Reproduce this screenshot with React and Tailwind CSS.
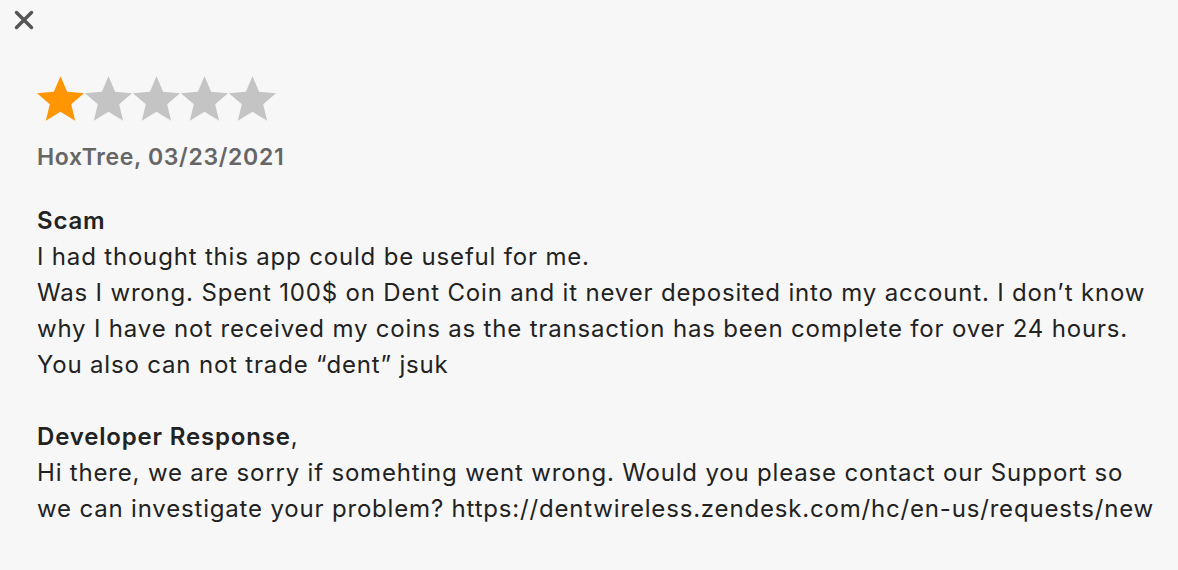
import React from "react";

function Star({ color }) {
  return (
    <svg viewBox="1.25 1.6 21.5 20.3" className="w-[47px] h-[45px]" aria-hidden>
      <path d="M12 1.6l3.05 7.1 7.7.6-5.85 5.05 1.8 7.55L12 17.85 5.3 21.9l1.8-7.55L1.25 9.3l7.7-.6z" fill={color} />
    </svg>
  );
}

export default function App() {
  const lines = [
    "I had thought this app could be useful for me.",
    "Was I wrong. Spent 100$ on Dent Coin and it never deposited into my account. I don\u2019t know",
    "why I have not received my coins as the transaction has been complete for over 24 hours.",
    "You also can not trade \u201cdent\u201d jsuk",
  ];
  return (
    <div
      className="w-[1178px] h-[570px] bg-[#f7f7f7] text-[#222] overflow-hidden"
      style={{ fontFamily: "Inter, 'Noto Sans', sans-serif" }}
    >
      <div className="pt-[10px] pl-[14px]">
        <svg viewBox="0 0 20 20" className="w-[20px] h-[20px]">
          <path d="M2.5 2.5L17.5 17.5M17.5 2.5L2.5 17.5" stroke="#555" strokeWidth="3.4" strokeLinecap="round" />
        </svg>
      </div>
      <div className="pl-[37px] pt-[46px]">
        <div className="flex gap-[1px]">
          <Star color="#ff9500" />
          <Star color="#c4c4c4" />
          <Star color="#c4c4c4" />
          <Star color="#c4c4c4" />
          <Star color="#c4c4c4" />
        </div>
        <div className="mt-[22px] text-[23px] font-semibold text-[#666] leading-[28px] tracking-[0.65px]">HoxTree, 03/23/2021</div>
        <div className="mt-[32px] text-[24px] leading-[36px] tracking-[0.82px]">
          <div className="font-semibold">Scam</div>
          {lines.map((l) => (
            <div key={l} className="whitespace-nowrap">{l}</div>
          ))}
          <div className="h-[36px]" />
          <div className="whitespace-nowrap"><span className="font-semibold">Developer Response</span>,</div>
          <div className="whitespace-nowrap">Hi there, we are sorry if somehting went wrong. Would you please contact our Support so</div>
          <div className="whitespace-nowrap">we can investigate your problem? https://dentwireless.zendesk.com/hc/en-us/requests/new</div>
        </div>
      </div>
    </div>
  );
}
